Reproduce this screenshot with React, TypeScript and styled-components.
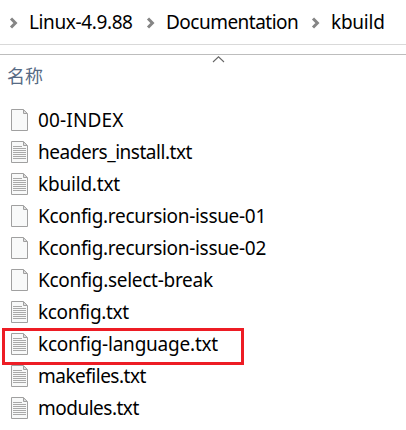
import React from "react";
import styled, { createGlobalStyle } from "styled-components";

const GlobalStyle = createGlobalStyle`
  * { box-sizing: border-box; }
  body { margin: 0; background: #fff; overflow: hidden; }
`;

const Window = styled.main`
  width: 406px;
  height: 430px;
  overflow: hidden;
  background: #fff;
  color: #000;
  font-family: "Noto Sans", "Noto Sans CJK SC", sans-serif;
  font-size: 19px;
  white-space: nowrap;
`;

const AddressBar = styled.nav`
  display: flex;
  align-items: center;
  height: 45px;
  padding: 0 0 0 9px;
  border-bottom: 1px solid #d9d9d9;
`;

const Crumb = styled.span<{ $width: number; $spacing: number }>`
  display: flex;
  flex: none;
  align-items: center;
  width: ${(p) => p.$width}px;
  letter-spacing: ${(p) => p.$spacing}px;
`;

const Chevron = styled.svg`
  flex: none;
  width: 9px;
  height: 12px;
  margin: 1px 11px 0 0;
`;

const ColumnHeader = styled.header`
  display: grid;
  grid-template-columns: 212px 1fr;
  height: 50px;
  margin-top: 9px;
  border-top: 1px solid #bdbdbd;
`;

const ColumnLabel = styled.span`
  padding: 7px 0 0 7px;
  color: #566a84;
  font-family: "Noto Sans CJK SC", sans-serif;
  font-size: 18px;
  font-weight: 400;
  line-height: 26px;
`;

const SortArrow = styled.svg`
  width: 13px;
  height: 8px;
`;

const FileList = styled.ul`
  margin: 0;
  padding: 0;
  list-style: none;
`;

const FileRow = styled.li`
  position: relative;
  display: flex;
  align-items: center;
  height: 32px;
  padding-left: 11px;
`;

const FileName = styled.span<{ $spacing: number }>`
  margin-left: 10px;
  line-height: 28px;
  letter-spacing: ${(p) => p.$spacing}px;
`;

const Highlight = styled.div`
  position: absolute;
  top: 0;
  left: 2px;
  z-index: 1;
  width: 242px;
  height: 37px;
  border: 3px solid #ed1c24;
`;

const PageIcon = styled.svg`
  flex: none;
  width: 17px;
  height: 22px;
`;

function FileIcon({ lined }: { lined: boolean }) {
  return (
    <PageIcon viewBox="0 0 17 22">
      <path d="M.5.5h11.7l4.3 4.3v16.7H.5z" fill="#f8f9f9" stroke="#a0a0a0" />
      <path d="M12.5.7v3.8h3.8z" fill="#e4e4e4" stroke="#a0a0a0" />
      {lined && (
        <path
          d="M2 5.5h9M2 7.5h13M2 9.5h13M2 11.5h13M2 13.5h13M2 15.5h13M2 17.5h13"
          stroke="#a9a9a9"
          fill="none"
        />
      )}
    </PageIcon>
  );
}

const crumbs = [
  { name: "Linux-4.9.88", width: 137, spacing: -0.38 },
  { name: "Documentation", width: 165, spacing: -0.52 },
  { name: "kbuild", width: 95, spacing: -0.25 },
];

const files = [
  { name: "00-INDEX", spacing: 0.15 },
  { name: "headers_install.txt", spacing: -0.47 },
  { name: "kbuild.txt", spacing: -0.2 },
  { name: "Kconfig.recursion-issue-01", spacing: -0.31 },
  { name: "Kconfig.recursion-issue-02", spacing: -0.31 },
  { name: "Kconfig.select-break", spacing: -0.29 },
  { name: "kconfig.txt", spacing: -0.34 },
  { name: "kconfig-language.txt", spacing: -0.22, marked: true },
  { name: "makefiles.txt", spacing: -0.5 },
  { name: "modules.txt", spacing: -0.5 },
];

export default function App() {
  return (
    <Window>
      <GlobalStyle />
      <AddressBar>
        {crumbs.map((c) => (
          <Crumb key={c.name} $width={c.width} $spacing={c.spacing}>
            <Chevron viewBox="0 0 9 12">
              <path d="M2 1.5 6.4 6l-4.4 4.5" fill="none" stroke="#858585" strokeWidth="3" />
            </Chevron>
            {c.name}
          </Crumb>
        ))}
      </AddressBar>
      <ColumnHeader>
        <ColumnLabel>名称</ColumnLabel>
        <SortArrow viewBox="0 0 13 8">
          <path d="M1 7 6.5 1.8 12 7" fill="none" stroke="#666" strokeWidth="1.1" />
        </SortArrow>
      </ColumnHeader>
      <FileList>
        {files.map((f) => (
          <FileRow key={f.name}>
            <FileIcon lined={f.name.endsWith(".txt")} />
            <FileName $spacing={f.spacing}>{f.name}</FileName>
            {f.marked && <Highlight />}
          </FileRow>
        ))}
      </FileList>
    </Window>
  );
}
